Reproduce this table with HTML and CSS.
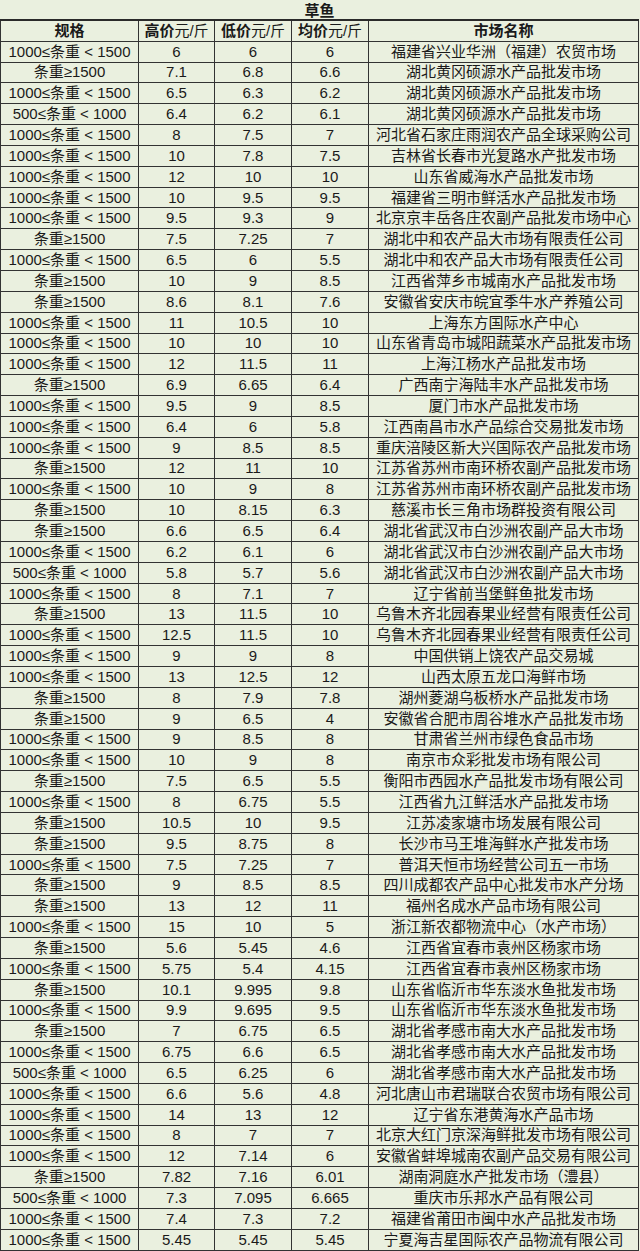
FILE: index.html
```html
<!DOCTYPE html>
<html lang="zh-CN">
<head>
<meta charset="utf-8">
<title>草鱼</title>
<link rel="stylesheet" href="styles.css">
</head>
<body>
<div class="sheet">
  <div class="title">草鱼</div>
  <div class="row head">
    <div class="c"><b>规格</b></div>
    <div class="c"><b>高价</b>元/斤</div>
    <div class="c"><b>低价</b>元/斤</div>
    <div class="c"><b>均价</b>元/斤</div>
    <div class="c"><b>市场名称</b></div>
  </div>
  <div class="row"><div class="c">1000≤条重 &lt; 1500</div><div class="c">6</div><div class="c">6</div><div class="c">6</div><div class="c">福建省兴业华洲（福建）农贸市场</div></div>
  <div class="row"><div class="c">条重≥1500</div><div class="c">7.1</div><div class="c">6.8</div><div class="c">6.6</div><div class="c">湖北黄冈硕源水产品批发市场</div></div>
  <div class="row"><div class="c">1000≤条重 &lt; 1500</div><div class="c">6.5</div><div class="c">6.3</div><div class="c">6.2</div><div class="c">湖北黄冈硕源水产品批发市场</div></div>
  <div class="row"><div class="c">500≤条重 &lt; 1000</div><div class="c">6.4</div><div class="c">6.2</div><div class="c">6.1</div><div class="c">湖北黄冈硕源水产品批发市场</div></div>
  <div class="row"><div class="c">1000≤条重 &lt; 1500</div><div class="c">8</div><div class="c">7.5</div><div class="c">7</div><div class="c">河北省石家庄雨润农产品全球采购公司</div></div>
  <div class="row"><div class="c">1000≤条重 &lt; 1500</div><div class="c">10</div><div class="c">7.8</div><div class="c">7.5</div><div class="c">吉林省长春市光复路水产批发市场</div></div>
  <div class="row"><div class="c">1000≤条重 &lt; 1500</div><div class="c">12</div><div class="c">10</div><div class="c">10</div><div class="c">山东省威海水产品批发市场</div></div>
  <div class="row"><div class="c">1000≤条重 &lt; 1500</div><div class="c">10</div><div class="c">9.5</div><div class="c">9.5</div><div class="c">福建省三明市鲜活水产品批发市场</div></div>
  <div class="row"><div class="c">1000≤条重 &lt; 1500</div><div class="c">9.5</div><div class="c">9.3</div><div class="c">9</div><div class="c">北京京丰岳各庄农副产品批发市场中心</div></div>
  <div class="row"><div class="c">条重≥1500</div><div class="c">7.5</div><div class="c">7.25</div><div class="c">7</div><div class="c">湖北中和农产品大市场有限责任公司</div></div>
  <div class="row"><div class="c">1000≤条重 &lt; 1500</div><div class="c">6.5</div><div class="c">6</div><div class="c">5.5</div><div class="c">湖北中和农产品大市场有限责任公司</div></div>
  <div class="row"><div class="c">条重≥1500</div><div class="c">10</div><div class="c">9</div><div class="c">8.5</div><div class="c">江西省萍乡市城南水产品批发市场</div></div>
  <div class="row"><div class="c">条重≥1500</div><div class="c">8.6</div><div class="c">8.1</div><div class="c">7.6</div><div class="c">安徽省安庆市皖宜季牛水产养殖公司</div></div>
  <div class="row"><div class="c">1000≤条重 &lt; 1500</div><div class="c">11</div><div class="c">10.5</div><div class="c">10</div><div class="c">上海东方国际水产中心</div></div>
  <div class="row"><div class="c">1000≤条重 &lt; 1500</div><div class="c">10</div><div class="c">10</div><div class="c">10</div><div class="c">山东省青岛市城阳蔬菜水产品批发市场</div></div>
  <div class="row"><div class="c">1000≤条重 &lt; 1500</div><div class="c">12</div><div class="c">11.5</div><div class="c">11</div><div class="c">上海江杨水产品批发市场</div></div>
  <div class="row"><div class="c">条重≥1500</div><div class="c">6.9</div><div class="c">6.65</div><div class="c">6.4</div><div class="c">广西南宁海陆丰水产品批发市场</div></div>
  <div class="row"><div class="c">1000≤条重 &lt; 1500</div><div class="c">9.5</div><div class="c">9</div><div class="c">8.5</div><div class="c">厦门市水产品批发市场</div></div>
  <div class="row"><div class="c">1000≤条重 &lt; 1500</div><div class="c">6.4</div><div class="c">6</div><div class="c">5.8</div><div class="c">江西南昌市水产品综合交易批发市场</div></div>
  <div class="row"><div class="c">1000≤条重 &lt; 1500</div><div class="c">9</div><div class="c">8.5</div><div class="c">8.5</div><div class="c">重庆涪陵区新大兴国际农产品批发市场</div></div>
  <div class="row"><div class="c">条重≥1500</div><div class="c">12</div><div class="c">11</div><div class="c">10</div><div class="c">江苏省苏州市南环桥农副产品批发市场</div></div>
  <div class="row"><div class="c">1000≤条重 &lt; 1500</div><div class="c">10</div><div class="c">9</div><div class="c">8</div><div class="c">江苏省苏州市南环桥农副产品批发市场</div></div>
  <div class="row"><div class="c">条重≥1500</div><div class="c">10</div><div class="c">8.15</div><div class="c">6.3</div><div class="c">慈溪市长三角市场群投资有限公司</div></div>
  <div class="row"><div class="c">条重≥1500</div><div class="c">6.6</div><div class="c">6.5</div><div class="c">6.4</div><div class="c">湖北省武汉市白沙洲农副产品大市场</div></div>
  <div class="row"><div class="c">1000≤条重 &lt; 1500</div><div class="c">6.2</div><div class="c">6.1</div><div class="c">6</div><div class="c">湖北省武汉市白沙洲农副产品大市场</div></div>
  <div class="row"><div class="c">500≤条重 &lt; 1000</div><div class="c">5.8</div><div class="c">5.7</div><div class="c">5.6</div><div class="c">湖北省武汉市白沙洲农副产品大市场</div></div>
  <div class="row"><div class="c">1000≤条重 &lt; 1500</div><div class="c">8</div><div class="c">7.1</div><div class="c">7</div><div class="c">辽宁省前当堡鲜鱼批发市场</div></div>
  <div class="row"><div class="c">条重≥1500</div><div class="c">13</div><div class="c">11.5</div><div class="c">10</div><div class="c">乌鲁木齐北园春果业经营有限责任公司</div></div>
  <div class="row"><div class="c">1000≤条重 &lt; 1500</div><div class="c">12.5</div><div class="c">11.5</div><div class="c">10</div><div class="c">乌鲁木齐北园春果业经营有限责任公司</div></div>
  <div class="row"><div class="c">1000≤条重 &lt; 1500</div><div class="c">9</div><div class="c">9</div><div class="c">8</div><div class="c">中国供销上饶农产品交易城</div></div>
  <div class="row"><div class="c">1000≤条重 &lt; 1500</div><div class="c">13</div><div class="c">12.5</div><div class="c">12</div><div class="c">山西太原五龙口海鲜市场</div></div>
  <div class="row"><div class="c">条重≥1500</div><div class="c">8</div><div class="c">7.9</div><div class="c">7.8</div><div class="c">湖州菱湖乌板桥水产品批发市场</div></div>
  <div class="row"><div class="c">条重≥1500</div><div class="c">9</div><div class="c">6.5</div><div class="c">4</div><div class="c">安徽省合肥市周谷堆水产品批发市场</div></div>
  <div class="row"><div class="c">1000≤条重 &lt; 1500</div><div class="c">9</div><div class="c">8.5</div><div class="c">8</div><div class="c">甘肃省兰州市绿色食品市场</div></div>
  <div class="row"><div class="c">1000≤条重 &lt; 1500</div><div class="c">10</div><div class="c">9</div><div class="c">8</div><div class="c">南京市众彩批发市场有限公司</div></div>
  <div class="row"><div class="c">条重≥1500</div><div class="c">7.5</div><div class="c">6.5</div><div class="c">5.5</div><div class="c">衡阳市西园水产品批发市场有限公司</div></div>
  <div class="row"><div class="c">1000≤条重 &lt; 1500</div><div class="c">8</div><div class="c">6.75</div><div class="c">5.5</div><div class="c">江西省九江鲜活水产品批发市场</div></div>
  <div class="row"><div class="c">条重≥1500</div><div class="c">10.5</div><div class="c">10</div><div class="c">9.5</div><div class="c">江苏凌家塘市场发展有限公司</div></div>
  <div class="row"><div class="c">条重≥1500</div><div class="c">9.5</div><div class="c">8.75</div><div class="c">8</div><div class="c">长沙市马王堆海鲜水产批发市场</div></div>
  <div class="row"><div class="c">1000≤条重 &lt; 1500</div><div class="c">7.5</div><div class="c">7.25</div><div class="c">7</div><div class="c">普洱天恒市场经营公司五一市场</div></div>
  <div class="row"><div class="c">条重≥1500</div><div class="c">9</div><div class="c">8.5</div><div class="c">8.5</div><div class="c">四川成都农产品中心批发市水产分场</div></div>
  <div class="row"><div class="c">条重≥1500</div><div class="c">13</div><div class="c">12</div><div class="c">11</div><div class="c">福州名成水产品市场有限公司</div></div>
  <div class="row"><div class="c">1000≤条重 &lt; 1500</div><div class="c">15</div><div class="c">10</div><div class="c">5</div><div class="c">浙江新农都物流中心（水产市场）</div></div>
  <div class="row"><div class="c">条重≥1500</div><div class="c">5.6</div><div class="c">5.45</div><div class="c">4.6</div><div class="c">江西省宜春市袁州区杨家市场</div></div>
  <div class="row"><div class="c">1000≤条重 &lt; 1500</div><div class="c">5.75</div><div class="c">5.4</div><div class="c">4.15</div><div class="c">江西省宜春市袁州区杨家市场</div></div>
  <div class="row"><div class="c">条重≥1500</div><div class="c">10.1</div><div class="c">9.995</div><div class="c">9.8</div><div class="c">山东省临沂市华东淡水鱼批发市场</div></div>
  <div class="row"><div class="c">1000≤条重 &lt; 1500</div><div class="c">9.9</div><div class="c">9.695</div><div class="c">9.5</div><div class="c">山东省临沂市华东淡水鱼批发市场</div></div>
  <div class="row"><div class="c">条重≥1500</div><div class="c">7</div><div class="c">6.75</div><div class="c">6.5</div><div class="c">湖北省孝感市南大水产品批发市场</div></div>
  <div class="row"><div class="c">1000≤条重 &lt; 1500</div><div class="c">6.75</div><div class="c">6.6</div><div class="c">6.5</div><div class="c">湖北省孝感市南大水产品批发市场</div></div>
  <div class="row"><div class="c">500≤条重 &lt; 1000</div><div class="c">6.5</div><div class="c">6.25</div><div class="c">6</div><div class="c">湖北省孝感市南大水产品批发市场</div></div>
  <div class="row"><div class="c">1000≤条重 &lt; 1500</div><div class="c">6.6</div><div class="c">5.6</div><div class="c">4.8</div><div class="c">河北唐山市君瑞联合农贸市场有限公司</div></div>
  <div class="row"><div class="c">1000≤条重 &lt; 1500</div><div class="c">14</div><div class="c">13</div><div class="c">12</div><div class="c">辽宁省东港黄海水产品市场</div></div>
  <div class="row"><div class="c">1000≤条重 &lt; 1500</div><div class="c">8</div><div class="c">7</div><div class="c">7</div><div class="c">北京大红门京深海鲜批发市场有限公司</div></div>
  <div class="row"><div class="c">1000≤条重 &lt; 1500</div><div class="c">12</div><div class="c">7.14</div><div class="c">6</div><div class="c">安徽省蚌埠城南农副产品交易有限公司</div></div>
  <div class="row"><div class="c">条重≥1500</div><div class="c">7.82</div><div class="c">7.16</div><div class="c">6.01</div><div class="c">湖南洞庭水产批发市场（澧县）</div></div>
  <div class="row"><div class="c">500≤条重 &lt; 1000</div><div class="c">7.3</div><div class="c">7.095</div><div class="c">6.665</div><div class="c">重庆市乐邦水产品有限公司</div></div>
  <div class="row"><div class="c">1000≤条重 &lt; 1500</div><div class="c">7.4</div><div class="c">7.3</div><div class="c">7.2</div><div class="c">福建省莆田市闽中水产品批发市场</div></div>
  <div class="row"><div class="c">1000≤条重 &lt; 1500</div><div class="c">5.45</div><div class="c">5.45</div><div class="c">5.45</div><div class="c">宁夏海吉星国际农产品物流有限公司</div></div>
</div>
</body>
</html>
```

FILE: styles.css
```css
html, body {
  margin: 0;
  padding: 0;
  background: #eaf0df;
}
body {
  font-family: "Liberation Sans", "Noto Sans CJK SC", sans-serif;
  font-size: 15px;
  color: #1a1a1a;
}
.sheet {
  width: 639px;
}
.title {
  height: 20.85px;
  box-sizing: border-box;
  border-bottom: 2px solid #2a2a2a;
  display: flex;
  align-items: center;
  justify-content: center;
  font-weight: bold;
}
.row {
  display: grid;
  grid-template-columns: 139px 76px 77px 77px 270px;
  height: 20.85px;
  box-sizing: border-box;
  border-bottom: 1px solid #333;
}
.c {
  display: flex;
  align-items: center;
  justify-content: center;
  white-space: pre;
  border-right: 1px solid #333;
  line-height: 18px;
  overflow: hidden;
}
.c:first-child {
  border-left: 1px solid #333;
}
.head .c b {
  font-weight: bold;
}
```
